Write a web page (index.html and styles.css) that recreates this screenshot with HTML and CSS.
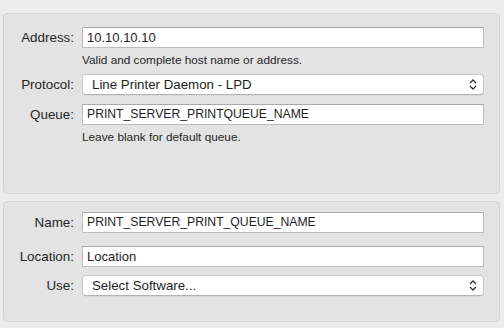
FILE: index.html
```html
<!DOCTYPE html>
<html>
<head>
    <meta charset="UTF-8">
    <title>Printer</title>
    <link rel="stylesheet" href="styles.css">
</head>
<body>
    <div class="panel panel-top">
        <div class="row">
            <label class="label">Address:</label>
            <div class="field">10.10.10.10</div>
        </div>
        <div class="hint hint-address">Valid and complete host name or address.</div>

        <div class="row row-protocol">
            <label class="label">Protocol:</label>
            <div class="select">
                <span>Line Printer Daemon - LPD</span>
                <svg class="arrows" width="8" height="13" viewBox="0 0 8 13"><path d="M1 5 L4 2 L7 5 M1 8 L4 11 L7 8" fill="none" stroke="#333" stroke-width="1.3"/></svg>
            </div>
        </div>

        <div class="row row-queue">
            <label class="label">Queue:</label>
            <div class="field caps">PRINT_SERVER_PRINTQUEUE_NAME</div>
        </div>
        <div class="hint">Leave blank for default queue.</div>
    </div>

    <div class="panel panel-bottom">
        <div class="row">
            <label class="label">Name:</label>
            <div class="field caps">PRINT_SERVER_PRINT_QUEUE_NAME</div>
        </div>
        <div class="row row-location">
            <label class="label">Location:</label>
            <div class="field">Location</div>
        </div>
        <div class="row row-use">
            <label class="label">Use:</label>
            <div class="select">
                <span>Select Software...</span>
                <svg class="arrows" width="8" height="13" viewBox="0 0 8 13"><path d="M1 5 L4 2 L7 5 M1 8 L4 11 L7 8" fill="none" stroke="#333" stroke-width="1.3"/></svg>
            </div>
        </div>
    </div>
</body>
</html>
```

FILE: styles.css
```css
* {
    box-sizing: border-box;
    margin: 0;
    padding: 0;
}
body {
    font-family: "Liberation Sans", Arial, sans-serif;
    font-size: 13px;
    color: #222;
    background-color: #ececec;
    padding: 13px 4px 0 3px;
}
.panel {
    background-color: #e3e3e3;
    border: 1px solid #d5d5d5;
    border-radius: 4px;
    padding-right: 15px;
}
.panel-top {
    height: 181px;
    padding-top: 13px;
}
.panel-bottom {
    margin-top: 7px;
    height: 121px;
    padding-top: 10px;
}
.row {
    display: flex;
    align-items: center;
    height: 21px;
}
.label {
    width: 70px;
    text-align: right;
    margin-right: 8px;
    color: #262626;
    font-size: 13.4px;
}
.field {
    flex: 1;
    height: 21px;
    line-height: 19px;
    background-color: #fff;
    border: 1px solid #bdbdbd;
    border-top-color: #a9a9a9;
    padding-left: 4px;
    color: #1e1e1e;
}
.caps {
    font-size: 12.2px;
}
.select {
    flex: 1;
    height: 21px;
    display: flex;
    align-items: center;
    justify-content: space-between;
    background-color: #fff;
    border: 1px solid #c9c9c9;
    border-bottom-color: #b3b3b3;
    border-radius: 4px;
    padding: 0 6px 0 9px;
    box-shadow: 0 1px 0 rgba(0, 0, 0, 0.04);
    color: #1e1e1e;
}
.select span {
    font-size: 13.3px;
}
.hint {
    font-size: 11.8px;
    line-height: 14px;
    margin: 5px 0 0 78px;
    color: #262626;
}
.row-protocol {
    margin-top: 7px;
}
.row-queue {
    margin-top: 9px;
}
.row-location {
    margin-top: 13px;
}
.row-use {
    margin-top: 8px;
}
```
